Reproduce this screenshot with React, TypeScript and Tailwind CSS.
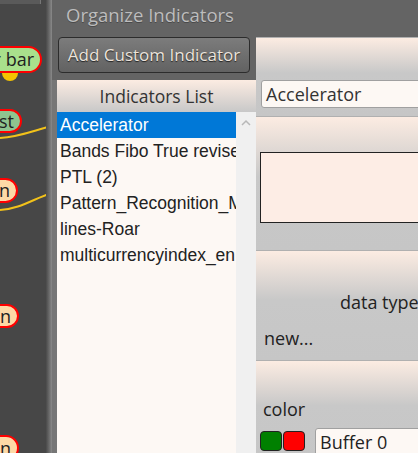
import React from 'react'

const INDICATORS = [
  'Accelerator',
  'Bands Fibo True revised',
  'PTL (2)',
  'Pattern_Recognition_Master',
  'lines-Roar',
  'multicurrencyindex_en',
]

const sans = { fontFamily: '"Open Sans", "Noto Sans", sans-serif' }

function NodePill({ label, top, right, height, bg }: { label: string; top: number; right: number; height: number; bg: string }) {
  return (
    <div
      className="absolute flex items-center justify-end rounded-full border-2 border-[#ff0000] pr-[6px] text-[18px] text-[#222]"
      style={{ top, left: right - 80, width: 80, height, background: bg, ...sans }}
    >
      {label}
    </div>
  )
}

function Canvas() {
  return (
    <div className="relative h-full w-[52px] shrink-0 overflow-hidden bg-[#474747]">
      <div className="absolute left-0 top-0 h-[4px] w-[40px] bg-[#5a5a5a]" />
      <div className="absolute left-[40px] top-0 h-[4px] w-px bg-[#777]" />
      <svg className="absolute left-0 top-0" width="52" height="453">
        <path d="M0 138 C 20 137, 35 130, 52 126" stroke="#f2c21a" strokeWidth="2" fill="none" />
        <path d="M0 210 C 20 209, 35 198, 52 193" stroke="#f2c21a" strokeWidth="2" fill="none" />
        <path d="M2 73 A 8 8 0 0 0 18 73 Z" fill="#f5c400" />
      </svg>
      <NodePill label="r bar" top={46} right={42} height={27} bg="#a9e08c" />
      <NodePill label="st" top={109} right={22} height={24} bg="#8fc48f" />
      <NodePill label="n" top={178} right={18} height={25} bg="#fdd9a6" />
      <NodePill label="n" top={304} right={19} height={24} bg="#fdd9a6" />
      <NodePill label="n" top={435} right={19} height={26} bg="#fdd9a6" />
      <div className="absolute right-0 top-0 h-full w-[6px] bg-gradient-to-r from-[#4a4a4a] to-[#8a8a8a]" />
    </div>
  )
}

function Section({ height, children }: { height: number; children?: React.ReactNode }) {
  return (
    <div
      className="relative shrink-0 border-t border-[#b0b0b0] bg-gradient-to-b from-[#fcece2] via-[#c8c8c8] via-[45%] to-[#c6c6c6]"
      style={{ height }}
    >
      {children}
    </div>
  )
}

export default function App() {
  return (
    <div className="flex h-[453px] w-[418px] overflow-hidden bg-[#646464]">
      <Canvas />
      <div className="flex min-w-0 flex-1 flex-col">
        <div className="flex h-[37px] shrink-0 items-start pl-[14px] pt-[1px]">
          <span className="text-[18.5px] text-[#bdbdbd] [text-shadow:0_1px_0_#4a4a4a]" style={sans}>
            Organize Indicators
          </span>
        </div>
        <div className="flex min-h-0 flex-1">
          <div className="flex w-[204px] shrink-0 flex-col">
            <div className="ml-[6px] flex h-[36px] w-[192px] items-center justify-center rounded-[4px] border border-[#2c2c2c] bg-gradient-to-b from-[#7c7c7c] to-[#626262] text-[17px] text-[#ece4dc] [text-shadow:0_1px_1px_#222]" style={sans}>
              Add Custom Indicator
            </div>
            <div className="mt-[7px] flex min-h-0 flex-1 bg-[#767676] pl-[5px]">
              <div className="flex min-w-0 flex-1 flex-col">
                <div className="flex h-[32px] shrink-0 items-center justify-center bg-gradient-to-b from-[#fcece2] to-[#c8c8c8] text-[17.5px] text-[#333]" style={sans}>
                  Indicators List
                </div>
                <div className="flex min-h-0 flex-1">
                  <div className="min-w-0 flex-1 overflow-hidden bg-[#fdf8f4]" style={{ fontFamily: '"Liberation Sans", Arial, sans-serif' }}>
                    {INDICATORS.map((name, i) => (
                      <div
                        key={name}
                        className={`flex h-[26px] items-center whitespace-nowrap pl-[3px] text-[17.5px] ${i === 0 ? 'bg-[#0078d7] text-white' : 'text-[#222]'}`}
                      >
                        {name}
                      </div>
                    ))}
                  </div>
                  <div className="flex w-[20px] shrink-0 justify-center bg-[#f0f0f0] pt-[5px]">
                    <svg width="12" height="12" viewBox="0 0 12 12">
                      <path d="M2 8 L6 4 L10 8" stroke="#b8b8b8" strokeWidth="1.5" fill="none" />
                    </svg>
                  </div>
                </div>
              </div>
            </div>
          </div>
          <div className="flex min-w-0 flex-1 flex-col overflow-hidden" style={sans}>
            <Section height={79}>
              <div className="absolute left-[5px] top-[42px] flex h-[28px] w-[200px] items-center rounded-[3px] border border-[#a0a0a0] bg-[#fdf8f4] pl-[4px] text-[18px] text-[#333]">
                Accelerator
              </div>
            </Section>
            <Section height={134}>
              <div className="absolute left-[4px] top-[35px] h-[71px] w-[200px] border border-[#222] bg-[#fdede5]" />
            </Section>
            <Section height={110}>
              <div className="absolute left-[84px] top-[38px] whitespace-nowrap text-[18px] text-[#222]">data type</div>
              <div className="absolute left-[8px] top-[74px] text-[18px] text-[#222]">new...</div>
            </Section>
            <Section height={100}>
              <div className="absolute left-[7px] top-[35px] text-[18px] text-[#222]">color</div>
              <div className="absolute left-[4px] top-[70px] flex gap-[1px]">
                <div className="h-[20px] w-[22px] rounded-[4px] border border-[#222] bg-[#008000]" />
                <div className="h-[20px] w-[22px] rounded-[4px] border border-[#222] bg-[#ff0000]" />
              </div>
              <div className="absolute left-[59px] top-[67px] flex h-[28px] w-[150px] items-center rounded-[3px] border border-[#a0a0a0] bg-[#fdf8f4] pl-[4px] text-[18px] text-[#222]">
                Buffer 0
              </div>
            </Section>
          </div>
        </div>
      </div>
    </div>
  )
}
